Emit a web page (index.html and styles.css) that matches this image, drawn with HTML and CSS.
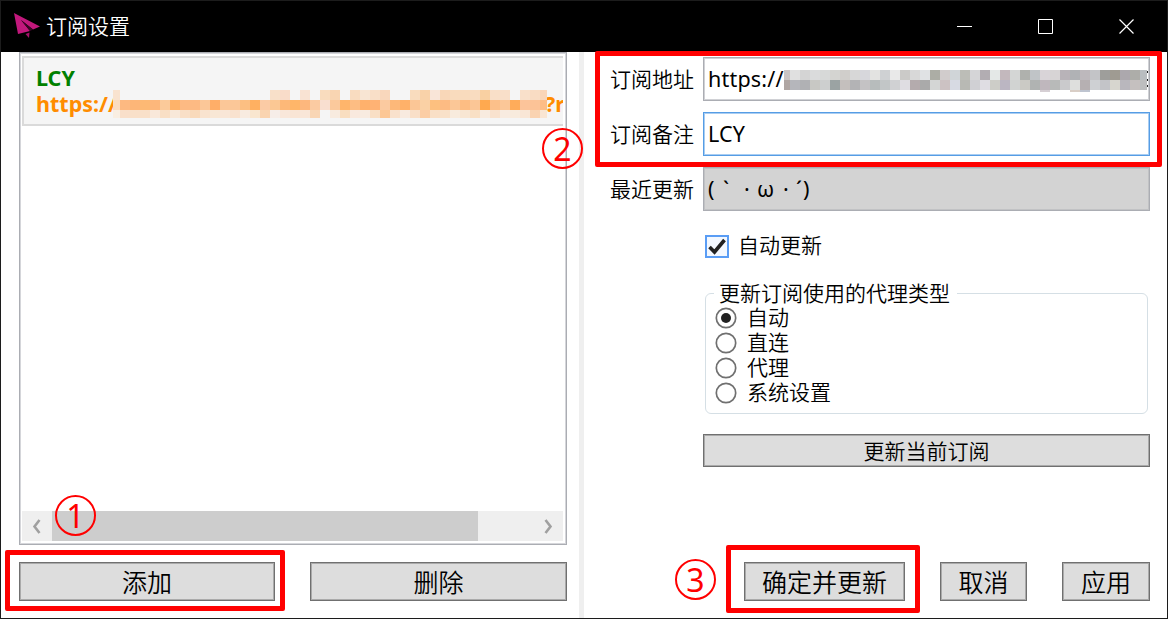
FILE: index.html
```html
<!DOCTYPE html>
<html lang="zh-CN">
<head>
<meta charset="utf-8">
<title>订阅设置</title>
<link rel="stylesheet" href="styles.css">
</head>
<body>
<div class="window">
  <header class="titlebar">
    <svg class="logo" width="28" height="28" viewBox="0 0 28 28"><path d="M1 0L27 13.500L20 16.500L8 7L17 18L5 21Z" fill="#c2187c"/><path d="M8 7L20 16.500L17 18Z" fill="#3a0625"/><path d="M12.500 21L16.500 19.500L16 25Z" fill="#a51269"/></svg>
    <span class="title">订阅设置</span>
    <div class="controls">
      <svg width="16" height="16"><path d="M0 7.500H15" stroke="#fff"/></svg>
      <svg width="16" height="16"><path d="M.5 .5H14.500V14.500H.5Z" stroke="#fff" fill="none"/></svg>
      <svg width="16" height="16"><path d="M.5 .5L14.500 14.500M14.500 .5L.5 14.500" stroke="#fff" stroke-width="1.2"/></svg>
    </div>
  </header>
  <main class="content">
    <section class="left">
      <div class="list">
        <div class="item">
          <div class="name">LCY</div>
          <div class="url"><span class="url-head">https://</span><span class="url-tail">?r</span></div>
          <svg class="mosaic mosaic-orange" id="orange" width="434" height="28"></svg>
        </div>
        <div class="scrollbar">
          <div class="arrow"><svg width="10" height="15"><path d="M7.500 1L2.500 7.500L7.500 14" fill="none" stroke="#a0a0a0" stroke-width="2.600"/></svg></div>
          <div class="track"><div class="thumb"></div></div>
          <div class="arrow"><svg width="10" height="15"><path d="M2.500 1L7.500 7.500L2.500 14" fill="none" stroke="#a0a0a0" stroke-width="2.600"/></svg></div>
        </div>
      </div>
      <div class="left-buttons">
        <button class="btn">添加</button>
        <button class="btn">删除</button>
      </div>
    </section>
    <div class="splitter"></div>
    <section class="right">
      <div class="form">
        <span class="label">订阅地址</span>
        <div class="field"><span class="field-url">https://</span><svg class="mosaic mosaic-gray" id="gray" width="363" height="22"></svg><svg class="cut" width="1" height="17"><path d="M0 0h1v2h-1zM0 8h1v2h-1zM0 14h1v2h-1z" fill="#222"/></svg></div>
        <span class="label">订阅备注</span>
        <div class="field focus">LCY</div>
        <span class="label">最近更新</span>
        <div class="field readonly"><span class="face"><i>(</i><i>`</i><i>·</i><i>ω</i><i>·</i><i>´</i><i>)</i></span></div>
      </div>
      <div class="check"><svg width="24" height="23"><rect x="1" y="1" width="22" height="21" fill="#f3f8ff" stroke="#5a9df5" stroke-width="2"/><path d="M4.500 12L9.500 17L19.500 5" fill="none" stroke="#212121" stroke-width="3.600"/></svg><span>自动更新</span></div>
      <fieldset class="group">
        <legend>更新订阅使用的代理类型</legend>
        <div class="radio"><svg width="22" height="22"><circle cx="11" cy="11" r="9.700"/><circle class="dot" cx="11" cy="11" r="5"/></svg><span>自动</span></div>
        <div class="radio"><svg width="22" height="22"><circle cx="11" cy="11" r="9.700"/></svg><span>直连</span></div>
        <div class="radio"><svg width="22" height="22"><circle cx="11" cy="11" r="9.700"/></svg><span>代理</span></div>
        <div class="radio"><svg width="22" height="22"><circle cx="11" cy="11" r="9.700"/></svg><span>系统设置</span></div>
      </fieldset>
      <button class="btn update">更新当前订阅</button>
      <div class="right-buttons">
        <button class="btn ok">确定并更新</button>
        <button class="btn cancel">取消</button>
        <button class="btn apply">应用</button>
      </div>
    </section>
  </main>
  <div class="mark mark-add"></div>
  <div class="mark mark-form"></div>
  <div class="mark mark-ok"></div>
  <div class="step step-1">1</div>
  <div class="step step-2">2</div>
  <div class="step step-3">3</div>
</div>
<script src="mosaic.js"></script>
</body>
</html>
```
FILE: styles.css
```css
* { box-sizing: border-box; }
body { margin: 0; font-family: "Noto Sans", "Noto Sans CJK SC DemiLight", "Noto Sans CJK SC", sans-serif; font-size: 21px; font-weight: 350; color: #000; }
.window { position: relative; width: 1168px; height: 619px; border: 1px solid #1c1c1c; background: #fff; overflow: hidden; display: flex; flex-direction: column; }
.titlebar { height: 51px; flex: none; background: #000; color: #fff; display: flex; align-items: center; padding: 0 32px 0 12px; }
.title { margin-left: 5px; line-height: 30px; padding-bottom: 2px; }
.controls { margin-left: auto; display: flex; gap: 65px; }
.controls svg, .logo, .check svg, .radio svg { display: block; flex: none; }
.content { flex: 1; display: flex; }
.left { width: 578px; padding: 0 12px 0 18px; }
.splitter { width: 5px; background: #efefef; }
.right { flex: 1; padding: 5px 17px 0 25px; }
.list { height: 493px; border: 1px solid #abadb3; box-shadow: inset 0 0 0 1px #d5d6da; padding: 3px 3px 3px 2px; display: flex; flex-direction: column; justify-content: space-between; }
.item { position: relative; height: 70px; border: 2px solid #dadada; border-right: 0; background: #f5f5f5; padding: 7px 0 0 12px; font-family: "Noto Sans", sans-serif; font-weight: 700; line-height: 26px; font-size: 21.500px; overflow: hidden; }
.name { color: #008000; }
.url { color: #ff8c00; display: flex; white-space: nowrap; }
.url-tail { position: absolute; left: 521px; }
.mosaic { position: absolute; shape-rendering: crispEdges; }
.mosaic-orange { left: 89px; top: 32px; }
.mosaic-gray { left: 80px; top: 12px; }
.cut { position: absolute; left: 443px; top: 13px; }
.scrollbar { height: 30px; display: flex; background: #efefef; }
.arrow { width: 30px; display: flex; align-items: center; justify-content: center; }
.track { flex: 1; }
.thumb { width: 426px; height: 30px; background: #cdcdcd; }
.left-buttons { display: grid; grid-template-columns: 256px 257px; gap: 35px; margin-top: 17px; }
.btn { height: 39px; padding: 0; border: 1px solid #707070; box-shadow: inset 0 0 0 1px #aaa; background: #ddd; color: #000; font-family: inherit; font-weight: inherit; font-size: 25px; line-height: 36px; }
.form { display: grid; grid-template-columns: 93px 447px; grid-auto-rows: 44px; row-gap: 11px; line-height: 44px; padding-left: 1px; }
.field { position: relative; height: 44px; border: 1px solid #abadb3; box-shadow: inset 0 0 0 1px #d0d1d5; padding-left: 4px; line-height: 42px; font-family: "Noto Sans", sans-serif; font-size: 21.500px; font-weight: 400; letter-spacing: .2px; overflow: hidden; }
.focus { border-color: #569de5; box-shadow: inset 0 0 0 1px #a9cdf2; }
.readonly { background: #d3d3d3; box-shadow: inset 0 0 0 1px #c1c2c4; }
.face { display: grid; grid-template-columns: 15px 21px 13px 26px 13px 7px 10px; }
.face i { font-style: normal; }
.check { display: flex; align-items: center; gap: 9px; height: 30px; margin: 20px 0 0 96px; }
.check span { padding-bottom: 4px; }
.radio span { padding-bottom: 2px; }
.group { position: relative; margin: 20px 0 0 96px; width: 443px; height: 133px; border: 1.500px solid #d5dfe5; border-radius: 6px; padding: 0 0 0 9px; }
legend { height: 25px; line-height: 25px; padding: 0 7px 0 5px; margin: 0 0 0 -1px; }
.radio { display: flex; align-items: center; gap: 10px; height: 24.800px; line-height: 24px; }
.radio circle { fill: #fff; stroke: #707070; stroke-width: 1.700; }
.radio .dot { fill: #212121; stroke: none; }
.update { width: 447px; height: 33px; margin: 20px 0 0 94px; font-size: 21px; line-height: 30px; display: block; }
.right-buttons { display: flex; justify-content: flex-end; gap: 35px; margin-top: 95px; }
.ok { width: 161px; }
.cancel { width: 87px; }
.apply { width: 88px; }
.mark { position: absolute; border: 5px solid #f00; border-radius: 2px; }
.mark-add { left: 4px; top: 549px; width: 280px; height: 61px; }
.mark-form { left: 594px; top: 50px; width: 567px; height: 116px; }
.mark-ok { left: 725px; top: 544px; width: 194px; height: 68px; }
.step { position: absolute; width: 41px; height: 41px; border: 2px solid #f00; border-radius: 50%; color: #f00; font-family: "Noto Sans", sans-serif; font-size: 32px; font-weight: 400; line-height: 37px; text-align: center; }
.step-1 { left: 54px; top: 494px; }
.step-2 { left: 541px; top: 127px; }
.step-3 { left: 674px; top: 558px; }
```
FILE: mosaic.js
```js
// Draws the pixelated cover over private parts of an address.
// Each row: y, height, then cells as hex colours ("-" leaves a gap).
function mosaic(id, firstWidth, rows) {
  const svg = document.getElementById(id);
  for (const [y, height, cells] of rows) {
    cells.split(" ").forEach((c, i) => {
      if (c === "-") return;
      const r = document.createElementNS("http://www.w3.org/2000/svg", "rect");
      r.setAttribute("x", i ? firstWidth + (i - 1) * 10 : 0);
      r.setAttribute("y", y);
      r.setAttribute("width", i ? 10 : firstWidth);
      r.setAttribute("height", height);
      r.setAttribute("fill", "#" + c);
      svg.appendChild(r);
    });
  }
}
mosaic("orange", 7, [
  [0, 10, "f9e3cf - - - - - - - - - - - - - - - f8e0c9 f9dcc9 - f9e3d3 - f9dcbe f9d5b2 - f9dcc0 f8e5d3 f9dfc8 f9d7bc - - f9dcbe f9d2a9 f9e5d8 f9d7b8 f9dbbd f9dbbd f9dcc0 f9d0a2 f9dfc8 f9dfc9 - f9e0ca f9dcc3 f9d5b8"],
  [10, 10, "fadcc0 fdb981 fdb678 fdb974 fdb77b fbca9a feb36a fdba83 fdba83 fbc798 ffae68 fbc798 fbc798 fcbf82 ffb061 fbcba5 fbc894 fdb878 ffb669 fdb77d fbcba2 f9dfd0 fbc99c ffb56b fdbd83 ffb16c ffb274 fbcaa0 fdb879 ffb169 fbc696 fad1a5 fdc07f fdbb83 fbc797 fdbd83 fbc696 ffa94f fcc08a fbc798 ffac5a fcc49a fcc397 fdbd86"],
  [20, 8, "f9eee2 f9dfca f9e0c9 f9e0c9 f9e8da f9dfc5 f8e8d9 f9dfc7 f9dabb f9e3cf f8e7d5 f9e6d7 f9e2cf f8ebe0 f9e6cf fad4b0 f6ede8 f9e7da f9e5d5 f9e6d8 f9d6b5 - f8ebdf f9dec0 f9e9de f8ebe0 f9dfc5 fcc795 f9e1cc f8eadf f9dfc8 fbcda5 f9dfc6 f9e1c9 f8ebdd f8e6d3 f9e0c5 f8ebdf f9e2ce f8ebe0 f8ebdd f9e6d6 fad3b1 f9e5d2"]
]);
mosaic("gray", 6, [
  [0, 10, "c9c4c4 e0e0e0 d4d4d4 dadbdc d7d9d8 d4d4d1 d0cecb d7d7d7 d7d7dc e3e3e1 cfd1d3 e9e9e9 cbcac8 d8d8d8 e0e2e4 acada5 d1cccc d0d5d8 bcbdb7 d5d5d7 b2adb2 e4e8e7 c3b8bd d4d6d5 afb1ad c0c4c7 d9d4d8 d7d4d5 b8b3b8 b0b2b5 bdb8bc c3c4c7 9e9e9b 9f9b92 aca8ad adada9 b9bdc0"],
  [10, 10, "afa6a3 b5b6bb b0b1b4 c8c8c4 cdcfcf 9ba3a3 c4bfbd b3b3b5 c4c2c4 b7bcbc c2c6c7 d0d1d3 dfdde2 b4abad aaaaaa d4d6d5 ccc2c3 d7dae3 b8b9b4 d0d0d4 dfdde3 cdcdc8 bbb6c2 d1d3d2 cbcac5 b0b3b2 bfb7bd b8bab9 cacacc dedfdd b6b0b2 ced0d3 c3c4c8 d7d6cf b9b7bd c5c0bf bdbebf"],
  [20, 2, "- - - - - - - - - - - - - - - - - - - - - - - - - - d6cfd4 - - d9cec6 bec4d0"]
]);
```
